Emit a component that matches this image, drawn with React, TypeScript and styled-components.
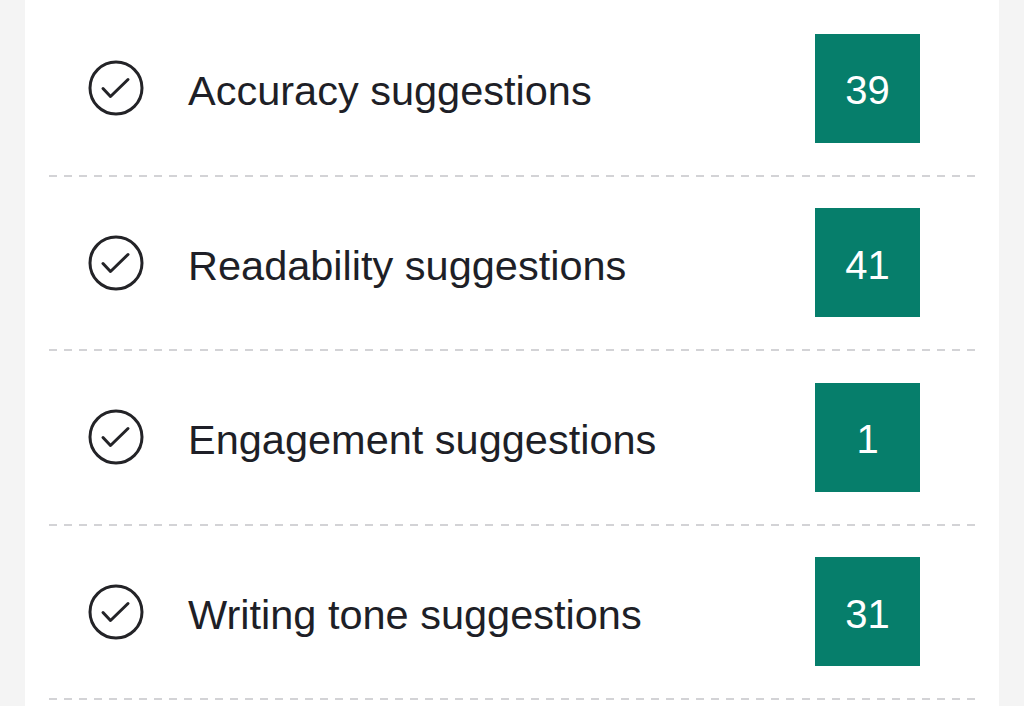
import React from 'react';
import styled, { createGlobalStyle } from 'styled-components';

const GlobalStyle = createGlobalStyle`
    html, body {
        margin: 0;
        padding: 0;
        background: #f4f4f4;
        font-family: 'Liberation Sans', Arial, sans-serif;
    }
`;

const Card = styled.section`
    margin: 0 25px;
    padding-top: 2px;
    background: #ffffff;
    min-height: 706px;
`;

const Row = styled.div`
    display: flex;
    align-items: center;
    height: 172.5px;
    padding: 0 79px 0 63px;
`;

const Check = styled.svg`
    flex-shrink: 0;
    width: 56px;
    height: 56px;
`;

const Label = styled.span`
    flex: 1;
    margin-left: 44px;
    font-size: 41.5px;
    color: #1e1f27;
    line-height: 1;
    padding-top: 5px;
`;

const Count = styled.div`
    display: flex;
    align-items: center;
    justify-content: center;
    width: 105px;
    height: 109px;
    padding-top: 5px;
    box-sizing: border-box;
    background: #067e6b;
    color: #ffffff;
    font-size: 40px;
`;

const Separator = styled.div`
    height: 2px;
    margin: 0 24px;
    background: repeating-linear-gradient(to right, #d3d3d6 0 8px, transparent 8px 15.05px);
`;

const CheckIcon = () => (
    <Check viewBox="0 0 56 56" fill="none" stroke="#232327" strokeWidth="3" strokeLinecap="round" strokeLinejoin="round">
        <circle cx="28" cy="28" r="26" />
        <path d="M15 28.5 L22.5 36.5 L40 19.5" />
    </Check>
);

type Suggestion = {
    label: string;
    count: number;
};

const suggestions: Suggestion[] = [
    { label: 'Accuracy suggestions', count: 39 },
    { label: 'Readability suggestions', count: 41 },
    { label: 'Engagement suggestions', count: 1 },
    { label: 'Writing tone suggestions', count: 31 },
];

const App = () => {
    return (
        <>
            <GlobalStyle />
            <Card>
                {suggestions.map(item => (
                    <React.Fragment key={item.label}>
                        <Row>
                            <CheckIcon />
                            <Label>{item.label}</Label>
                            <Count>{item.count}</Count>
                        </Row>
                        <Separator />
                    </React.Fragment>
                ))}
            </Card>
        </>
    );
};

export default App;
